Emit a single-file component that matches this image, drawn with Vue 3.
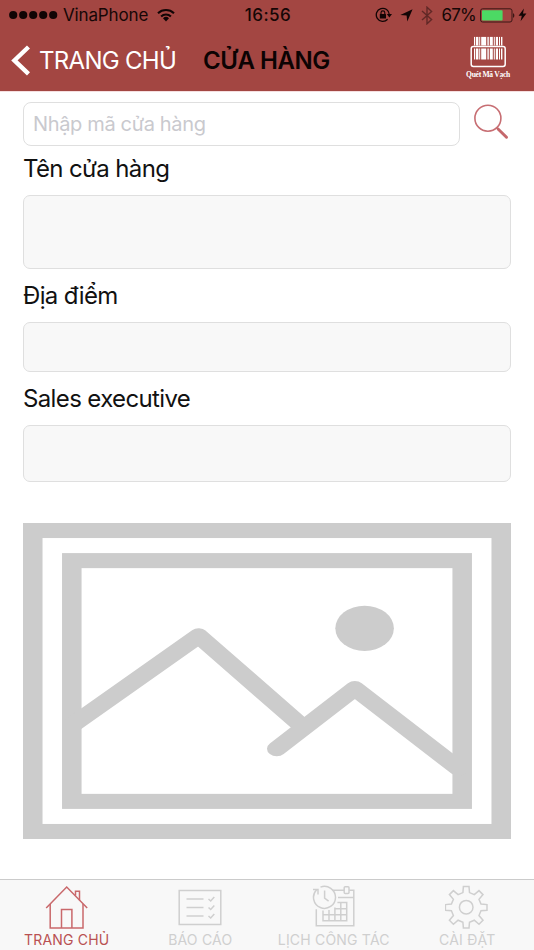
<script setup>
import { ref } from 'vue'

const storeCode = ref('')
const activeTab = ref('home')

const fields = [
  { key: 'name', label: 'Tên cửa hàng' },
  { key: 'address', label: 'Địa điểm' },
  { key: 'sales', label: 'Sales executive' }
]

const tabs = [
  { key: 'home', label: 'TRANG CHỦ' },
  { key: 'report', label: 'BÁO CÁO' },
  { key: 'schedule', label: 'LỊCH CÔNG TÁC' },
  { key: 'settings', label: 'CÀI ĐẶT' }
]

// x, width of each barcode stripe
const bars = [
  [0, 1.2], [2, 2.4], [5.2, 1], [7.2, 5], [13.4, 1.4], [15.8, 3], [19.8, 1], [21.8, 2.2], [25, 1], [27, 1.4]
]
</script>

<template>
  <div class="screen">
    <header class="header">
      <div class="status">
        <div class="status-left">
          <svg class="signal" width="50" height="10" viewBox="0 0 50 10">
            <circle v-for="n in 5" :key="n" :cx="n * 10 - 5.8" cy="5" r="4.1" />
          </svg>
          <span class="carrier">VinaPhone</span>
          <svg class="wifi" width="18" height="14" viewBox="0 0 18 14">
            <g fill="none" stroke="#120505" stroke-width="2.1">
              <path d="M1 5.2a11.6 11.6 0 0 1 16 0" />
              <path d="M4.1 8.4a7.1 7.1 0 0 1 9.8 0" />
            </g>
            <path d="M9 13.4l-3-3.1a4.3 4.3 0 0 1 6 0z" fill="#120505" />
          </svg>
        </div>
        <span class="time">16:56</span>
        <div class="status-right">
          <svg width="17" height="16" viewBox="0 0 17 16">
            <path d="M12.6 12.2A6.5 6.5 0 1 1 14.3 7.6" fill="none" stroke="#120505" stroke-width="1.3" />
            <path d="M11.8 7h5.2l-2.6 3.4z" fill="#120505" />
            <rect x="4.8" y="7" width="6.2" height="4.6" rx=".5" fill="#120505" />
            <path d="M6 7.4V5.8a1.9 1.9 0 0 1 3.8 0v1.6" fill="none" stroke="#120505" stroke-width="1.1" />
          </svg>
          <svg class="location" width="13" height="13" viewBox="0 0 13 13">
            <path d="M12.6.3L7.3 12.6 6.6 6.5.3 5.9z" fill="#120505" />
          </svg>
          <svg class="bluetooth" width="12" height="19" viewBox="0 0 12 19">
            <path d="M1 5l9.6 8.6L6 17.8V1.2l4.6 4.2L1 14" fill="none" stroke="#120505" stroke-width="1.4" />
          </svg>
          <span class="percent">67%</span>
          <svg class="battery" width="36" height="15" viewBox="0 0 36 15">
            <rect x=".6" y=".8" width="31.4" height="13.2" rx="2" fill="none" stroke="#3b1615" stroke-width="1" />
            <rect x="2" y="2.2" width="20.6" height="10.4" rx=".8" fill="#4cd964" />
            <path d="M33 5.2c1.8.5 1.8 4.1 0 4.6z" fill="#3b1615" />
          </svg>
          <svg class="bolt" width="9" height="14" viewBox="0 0 9 14">
            <path d="M5.9.6L.6 7.8h3.2L2.6 13.2 8.4 5.6H5z" fill="#120505" />
          </svg>
        </div>
      </div>
      <div class="nav">
        <button class="back">
          <svg width="20" height="32" viewBox="0 0 20 32">
            <path d="M18.5 2L4.4 15.4l14.1 13.4" fill="none" stroke="#fff" stroke-width="4.4" />
          </svg>
          <span>TRANG CHỦ</span>
        </button>
        <h1 class="title">CỬA HÀNG</h1>
        <button class="scan">
          <svg width="36" height="32" viewBox="0 0 36 32">
            <g fill="#fff">
              <rect v-for="bar in bars" :key="bar[0]" :x="bar[0] + 4" y=".9" :width="bar[1]" height="8.6" />
              <rect v-for="bar in bars" :key="'b' + bar[0]" :x="bar[0] + 4" y="12.5" :width="bar[1]" height="11" />
            </g>
            <rect x="1.2" y="10.6" width="34" height="19.8" rx="2.2" fill="none" stroke="#fff" stroke-width="1.5" />
          </svg>
          <span>Quét Mã Vạch</span>
        </button>
      </div>
    </header>

    <main class="content">
      <div class="search">
        <input v-model="storeCode" class="search-input" type="text" placeholder="Nhập mã cửa hàng" />
        <button class="search-button">
          <svg width="36" height="36" viewBox="0 0 36 36">
            <circle cx="14.9" cy="14.2" r="13" fill="none" stroke="#c76e73" stroke-width="1.6" />
            <path d="M23.6 23.6l2.2 2.2" stroke="#c76e73" stroke-width="1.8" />
            <path d="M25.3 25.2l8.2 8" stroke="#c5686c" stroke-width="3" stroke-linecap="round" />
          </svg>
        </button>
      </div>

      <section v-for="field in fields" :key="field.key" class="field" :class="field.key">
        <label class="field-label">{{ field.label }}</label>
        <div class="field-box"></div>
      </section>

      <svg class="photo" viewBox="0 0 25 21" preserveAspectRatio="none">
        <g fill="none" stroke="#ccc" stroke-width="1">
          <rect x=".5" y=".5" width="24" height="20" />
          <rect x="2.5" y="2.5" width="20" height="16" />
          <path d="M2.5 13.45L9 7.5l5.3 6" stroke-linejoin="round" />
          <path d="M13 15l4-4 5.3 5.3" stroke-linecap="round" stroke-linejoin="round" />
        </g>
        <circle cx="17.5" cy="7" r="1.5" fill="#ccc" />
      </svg>
    </main>

    <nav class="tabbar">
      <button
        v-for="tab in tabs"
        :key="tab.key"
        class="tab"
        :class="[tab.key, { active: activeTab === tab.key }]"
        @click="activeTab = tab.key"
      >
        <svg class="tab-icon" width="44" height="44" viewBox="0 0 44 44" fill="none" stroke="currentColor" stroke-width="1.5">
          <g v-if="tab.key === 'home'">
            <path d="M1.2 23L21.7 2l20.5 21" />
            <path d="M5.2 19v24h32.8V19" />
            <path d="M16.5 43V24.6h10.4V43" />
            <path d="M30.5 10.5V6.2h4v9" />
          </g>
          <g v-else-if="tab.key === 'report'">
            <rect x="1.2" y="5.5" width="41.6" height="34" />
            <path d="M8.5 14h17M8.5 22.5h17M8.5 31h17" />
            <path d="M30.5 14l2.2 2 3.6-4M30.5 22.5l2.2 2 3.6-4M30.5 31l2.2 2 3.6-4" />
          </g>
          <g v-else-if="tab.key === 'schedule'">
            <path d="M4.3 24.3v16.4h37.5V5.3h-4.6M32.2 5.3h-12M26 12.6h15.8" />
            <rect x="32.2" y="1.8" width="4.8" height="6.8" rx="1" />
            <path d="M8.5 2.1A11 11 0 1 1 4.6 4.7" />
            <path d="M1 4.4h5v5M12.6 5.6v7.6l4 3" />
            <path d="M11 25.6v10.2h23.7V17.5H25.4M11 29.8h23.7M17 25v10.8M22.9 22.5v13.3M28.8 17.5v18.3M22.2 23.7h12.5" />
          </g>
          <g v-else>
            <path d="M18.7 7.6L19.2 1.5h5.6l.5 6.1 4.8 2 4.7-4 4 4-4 4.7 2 4.8 6 .5v5.6l-6 .5-2 4.8 4 4.7-4 4-4.7-4-4.8 2-.5 5.8h-5.6l-.5-5.8-4.8-2-4.7 4-4-4 4-4.7-2-4.8-6-.5v-5.6l6-.5 2-4.8-4-4.7 4-4 4.7 4z" transform="translate(-.8 0)" />
            <circle cx="21.2" cy="22.2" r="6.8" />
          </g>
        </svg>
        <span class="tab-label">{{ tab.label }}</span>
      </button>
    </nav>
  </div>
</template>

<style>
body {
  margin: 0;
  background: #fff;
}
</style>

<style scoped>
.screen {
  display: flex;
  flex-direction: column;
  width: 534px;
  height: 950px;
  overflow: hidden;
  background: #fff;
  font-family: Inter, "Noto Sans", sans-serif;
  color: #111;
}

button {
  padding: 0;
  border: 0;
  background: none;
  font-family: inherit;
  cursor: pointer;
}

svg {
  display: block;
  flex-shrink: 0;
}

.header {
  box-sizing: border-box;
  height: 92px;
  background: #a34642;
  border-bottom: 1px solid #f6dfe0;
}

.status {
  display: grid;
  grid-template-columns: 1fr auto 1fr;
  align-items: center;
  height: 30px;
  padding: 0 7px 0 9px;
  font-size: 17px;
  color: #160706;
}

.status-left,
.status-right {
  display: flex;
  align-items: center;
}

.status-right {
  justify-content: flex-end;
}

.signal {
  fill: #120505;
}

.carrier {
  margin-left: 4px;
  letter-spacing: -0.15px;
}

.wifi {
  margin-left: 9px;
}

.time {
  font-weight: 500;
  letter-spacing: 0.5px;
}

.location {
  margin-left: 8px;
}

.bluetooth {
  margin-left: 8px;
  opacity: 0.45;
}

.percent {
  margin-left: 9px;
  letter-spacing: -0.8px;
}

.battery {
  margin-left: 4px;
}

.bolt {
  margin-left: 2px;
}

.nav {
  display: flex;
  height: 61px;
  padding-right: 23px;
}

.back {
  display: flex;
  align-items: center;
  width: 203px;
  box-sizing: border-box;
  padding-left: 10px;
  font-size: 24px;
  letter-spacing: -0.7px;
  color: #fff;
  white-space: nowrap;
}

.back span {
  margin-left: 9px;
}

.title {
  margin: 0;
  font-size: 24px;
  font-weight: 600;
  letter-spacing: -0.45px;
  line-height: 61px;
  color: #0c0303;
  white-space: nowrap;
}

.scan {
  display: flex;
  flex-direction: column;
  align-items: center;
  width: 46px;
  margin-left: auto;
  padding-top: 6px;
}

.scan span {
  margin-top: 2px;
  font-family: "Liberation Serif", serif;
  font-size: 7.6px;
  font-weight: 700;
  letter-spacing: -0.3px;
  line-height: 9px;
  color: #fff;
  white-space: nowrap;
}

.content {
  flex: 1;
  padding: 10px 23px 0;
}

.search {
  display: flex;
  height: 44px;
}

.search-input {
  box-sizing: border-box;
  width: 437px;
  height: 44px;
  padding: 0 9px;
  border: 1px solid #dfdfdf;
  border-radius: 8px;
  outline: none;
  font-family: inherit;
  font-size: 20px;
  letter-spacing: -0.35px;
  color: #111;
}

.search-input::placeholder {
  color: #c9c9ce;
  opacity: 1;
}

.search-button {
  margin: 2px 0 0 13px;
  align-self: flex-start;
}

.field-label {
  display: block;
  height: 30px;
  font-size: 24px;
  letter-spacing: -0.63px;
  line-height: 30px;
  white-space: nowrap;
}

.field-box {
  box-sizing: border-box;
  border: 1px solid #dfdfdf;
  border-radius: 7px;
  background: #f8f8f8;
}

.name {
  padding-top: 8px;
}

.name .field-box {
  height: 74px;
  margin-top: 11px;
}

.address {
  padding-top: 12px;
}

.address .field-box {
  height: 50px;
  margin-top: 11px;
}

.sales {
  padding-top: 12px;
}

.sales .field-box {
  height: 57px;
  margin-top: 11px;
}

.photo {
  width: 488px;
  height: 316px;
  margin-top: 41px;
}

.tabbar {
  display: grid;
  grid-template-columns: repeat(4, 1fr);
  box-sizing: border-box;
  height: 71px;
  border-top: 1px solid #cbcbcb;
  background: #f8f8f8;
}

.tab {
  display: flex;
  flex-direction: column;
  align-items: center;
  padding-top: 5px;
  color: #cfcfcf;
}

.tab.active {
  color: #c9686b;
}

.tab-label {
  margin-top: 2px;
  font-size: 14px;
  letter-spacing: 0.2px;
  line-height: 18px;
  white-space: nowrap;
}

.active .tab-label {
  color: #b95152;
}
</style>
